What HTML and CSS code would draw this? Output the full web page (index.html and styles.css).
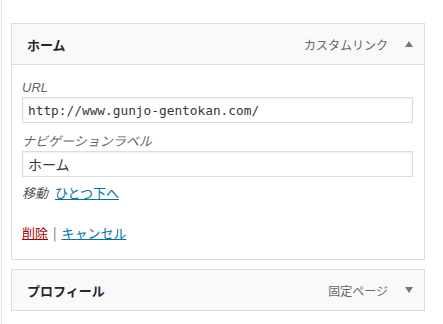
FILE: index.html
```html
<!DOCTYPE html>
<html lang="ja">
<head>
    <meta charset="UTF-8">
    <meta name="viewport" content="width=device-width, initial-scale=1.0">
    <title>メニュー項目</title>
    <link rel="stylesheet" href="styles.css">
</head>
<body>
    <div class="page">
        <div class="menu-item">
            <div class="item-bar">
                <span class="item-title">ホーム</span>
                <span class="item-controls">
                    <span class="item-type">カスタムリンク</span>
                    <span class="arrow arrow-up"></span>
                </span>
            </div>
            <div class="item-settings">
                <div class="field">
                    <label class="field-label">URL</label>
                    <input class="field-input mono" type="text" value="http://www.gunjo-gentokan.com/">
                </div>
                <div class="field">
                    <label class="field-label">ナビゲーションラベル</label>
                    <input class="field-input" type="text" value="ホーム">
                </div>
                <div class="move-row">
                    <span class="move-label">移動</span>
                    <a href="#" class="link">ひとつ下へ</a>
                </div>
                <div class="actions">
                    <a href="#" class="link link-delete">削除</a>
                    <span class="sep">|</span>
                    <a href="#" class="link">キャンセル</a>
                </div>
            </div>
        </div>

        <div class="menu-item">
            <div class="item-bar">
                <span class="item-title">プロフィール</span>
                <span class="item-controls">
                    <span class="item-type">固定ページ</span>
                    <span class="arrow arrow-down"></span>
                </span>
            </div>
        </div>
    </div>
</body>
</html>
```

FILE: styles.css
```css
* {
    margin: 0;
    padding: 0;
    box-sizing: border-box;
}

body {
    font-family: "Liberation Sans", "Noto Sans CJK JP", sans-serif;
    background: #fff;
    color: #23282d;
    font-size: 13px;
}

.page {
    margin-left: 1px;
    border-left: 1px solid #e5e5e5;
    min-height: 324px;
    padding: 23px 0 0 9px;
}

.menu-item {
    width: 414px;
    border: 1px solid #dcdcdc;
    margin-bottom: 9px;
}

.item-bar {
    display: flex;
    align-items: center;
    justify-content: space-between;
    height: 40px;
    padding: 0 11px 0 15px;
    background: #f9f9f9;
}

.item-settings {
    border-top: 1px solid #dcdcdc;
    background: #fff;
    padding: 13px 11px 17px 10px;
}

.item-title {
    font-family: "Noto Sans CJK JP", sans-serif;
    font-weight: 700;
    font-size: 13px;
    color: #23282d;
}

.item-controls {
    display: flex;
    align-items: center;
}

.item-type {
    font-family: "Noto Sans CJK JP", sans-serif;
    font-size: 12px;
    color: #666;
    margin-right: 17px;
}

.arrow {
    width: 0;
    height: 0;
    border-left: 4px solid transparent;
    border-right: 4px solid transparent;
}

.arrow-up {
    border-bottom: 6px solid #777;
}

.arrow-down {
    border-top: 6px solid #777;
}

.field {
    margin-bottom: 9px;
}

.field-label {
    display: block;
    font-style: italic;
    color: #666;
    line-height: 19px;
    font-size: 13px;
}

.field-input {
    display: block;
    width: 391px;
    height: 26px;
    border: 1px solid #ddd;
    box-shadow: inset 0 1px 2px rgba(0,0,0,0.07);
    padding: 0 5px;
    font-family: "Noto Sans CJK JP", sans-serif;
    font-size: 14px;
    color: #32373c;
    background: #fff;
}

.field-input.mono {
    font-family: "DejaVu Sans Mono", monospace;
    font-size: 12.8px;
}

.move-row {
    line-height: 18px;
    margin-top: -2px;
    font-family: "Noto Sans CJK JP", sans-serif;
}

.move-label {
    font-style: italic;
    color: #555;
    margin-right: 4px;
}

.actions {
    margin-top: 22px;
    line-height: 18px;
    font-family: "Noto Sans CJK JP", sans-serif;
}

.link {
    color: #0073aa;
    text-decoration: underline;
}

.link-delete {
    color: #a00;
}

.sep {
    color: #666;
    margin: 0 2px;
}
```
